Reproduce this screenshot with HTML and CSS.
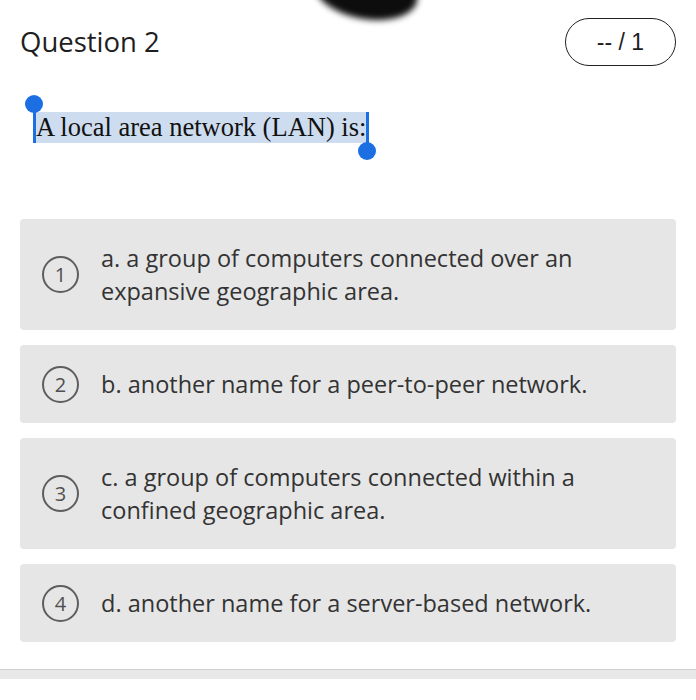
FILE: index.html
```html
<!DOCTYPE html>
<html lang="en">
<head>
<meta charset="utf-8">
<title>Question 2</title>
<link rel="stylesheet" href="styles.css">
</head>
<body>
<div class="blob"></div>
<main class="page">
  <header class="head">
    <h1 class="title">Question 2</h1>
    <div class="score">-- / 1</div>
  </header>
  <p class="question"><span class="sel"><span class="h-start"></span>A local area network (LAN) is:<span class="h-end"></span></span></p>
  <ol class="options">
    <li class="opt"><span class="num">1</span><span class="txt">a. a group of computers connected over an expansive geographic area.</span></li>
    <li class="opt"><span class="num">2</span><span class="txt">b. another name for a peer-to-peer network.</span></li>
    <li class="opt"><span class="num">3</span><span class="txt">c. a group of computers connected within a confined geographic area.</span></li>
    <li class="opt"><span class="num">4</span><span class="txt">d. another name for a server-based network.</span></li>
  </ol>
</main>
<div class="footer-bar"></div>
</body>
</html>
```

FILE: styles.css
```css
html, body {
  margin: 0;
  padding: 0;
  background: #ffffff;
}
body {
  position: relative;
  width: 696px;
  height: 700px;
  overflow: hidden;
  font-family: "Open Sans", "Liberation Sans", sans-serif;
}
.blob {
  position: absolute;
  left: 314px;
  top: -36px;
  width: 104px;
  height: 55px;
  background: #0d0d0d;
  border-radius: 50%;
  transform: rotate(10deg);
  filter: blur(3px);
}
.page {
  padding: 18px 20px 0 20px;
}
.head {
  display: flex;
  justify-content: space-between;
  align-items: center;
  height: 48px;
}
.title {
  margin: 0;
  font-family: "Open Sans", sans-serif;
  font-weight: 500;
  font-size: 27.5px;
  line-height: 48px;
  color: #1e1e1e;
}
.score {
  box-sizing: border-box;
  width: 111px;
  height: 48px;
  border: 1.5px solid #222;
  border-radius: 24px;
  display: flex;
  align-items: center;
  justify-content: center;
  font-family: "Liberation Sans", Arial, sans-serif;
  font-size: 23px;
  color: #1e1e1e;
}
.question {
  margin: 46px 0 0 0;
  padding-left: 16px;
  font-family: "Liberation Serif", "Times New Roman", serif;
  font-size: 26.5px;
  line-height: 31px;
  color: #111;
}
.sel {
  position: relative;
  display: inline-block;
  background: #cddcee;
  padding-right: 1px;
}
.h-start, .h-end {
  position: absolute;
  top: 0;
  width: 3px;
  height: 39px;
  background: #1b6fe2;
}
.h-start {
  left: -3.5px;
  top: -8px;
}
.h-end {
  left: 100%;
  margin-left: -1.5px;
}
.h-start::before, .h-end::after {
  content: "";
  position: absolute;
  width: 18px;
  height: 18px;
  border-radius: 50%;
  background: #1b6fe2;
  left: -7.5px;
}
.h-start::before {
  top: -9px;
}
.h-end::after {
  top: 30px;
}
.options {
  list-style: none;
  margin: 76px 0 0 0;
  padding: 0;
  display: flex;
  flex-direction: column;
  gap: 15px;
}
.opt {
  display: flex;
  align-items: center;
  gap: 22px;
  background: #e6e6e6;
  border-radius: 4px;
  padding: 22.5px 40px 22.5px 22px;
}
.num {
  flex: none;
  box-sizing: border-box;
  width: 37px;
  height: 37px;
  margin: -2px 0;
  border: 2px solid #5e5e5e;
  border-radius: 50%;
  display: flex;
  align-items: center;
  justify-content: center;
  font-size: 20px;
  color: #505050;
}
.txt {
  font-size: 23.5px;
  line-height: 33px;
  color: #333;
}
.footer-bar {
  position: absolute;
  left: 0;
  right: 0;
  top: 669px;
  height: 10px;
  background: #e8e8e8;
  border-top: 1px solid #cfcfcf;
  box-sizing: border-box;
}
```
